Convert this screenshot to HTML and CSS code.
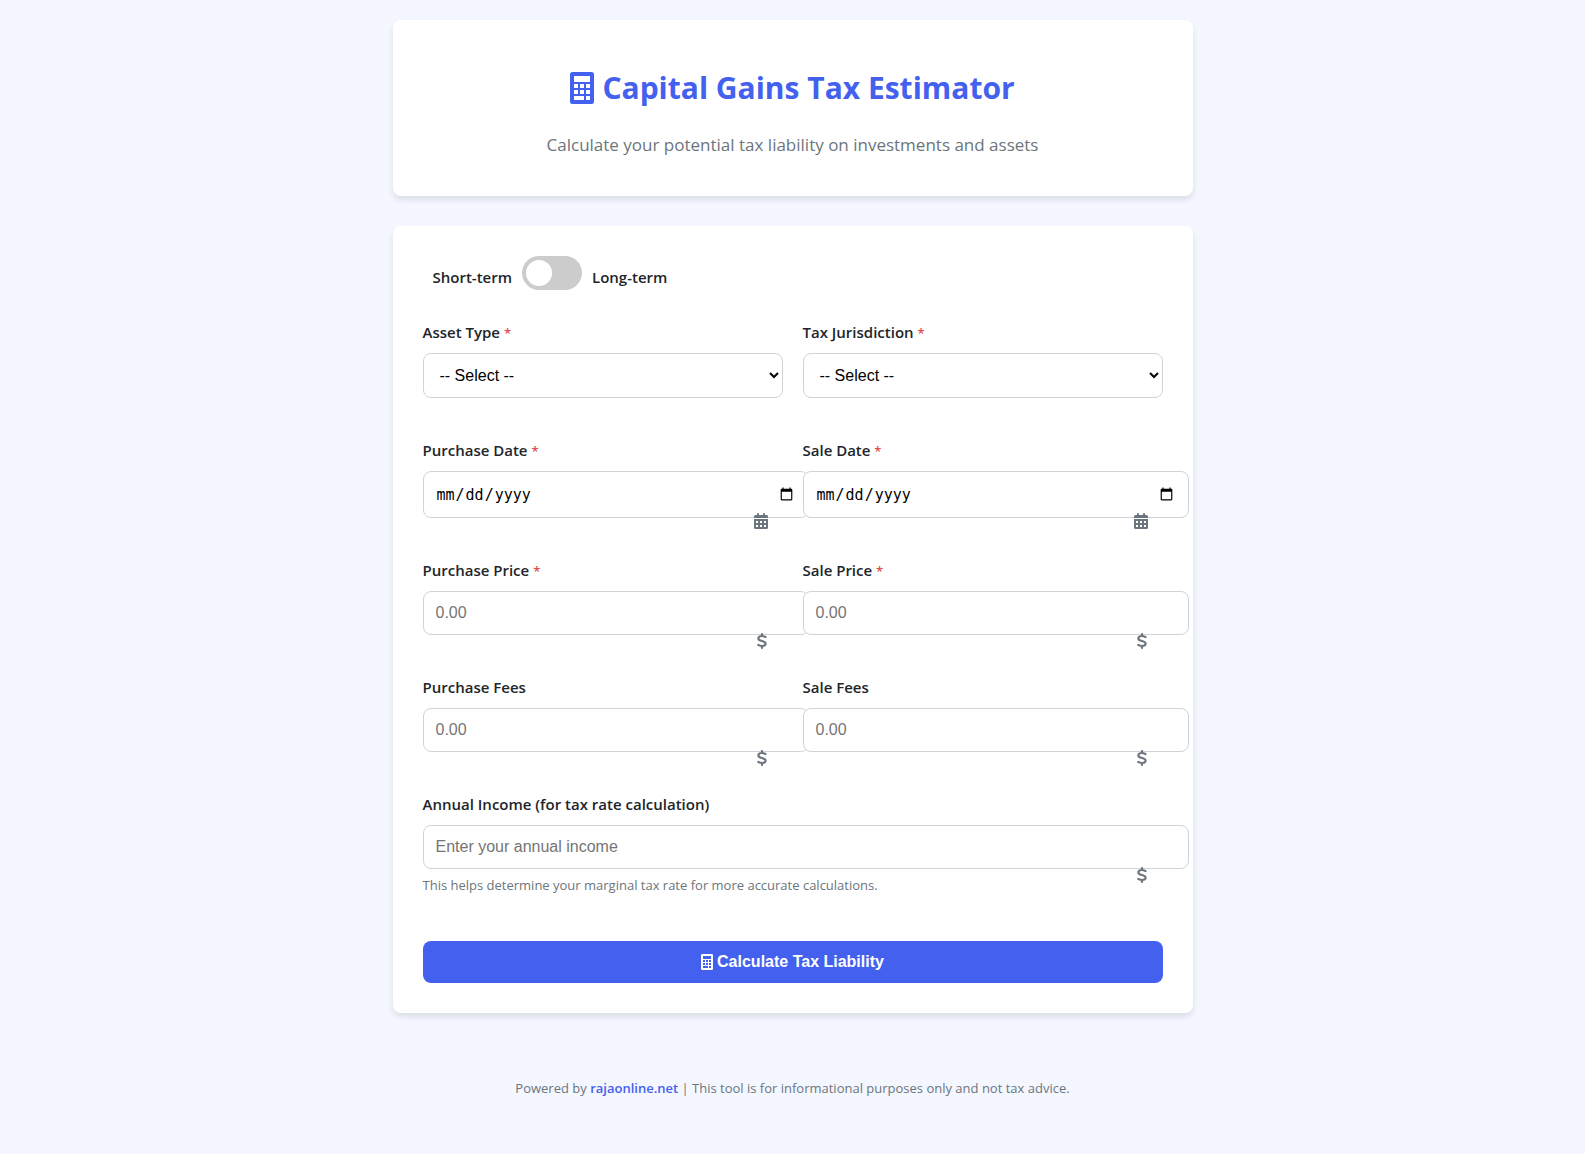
FILE: index.html
```html
<!DOCTYPE html>
<html lang="en">
<head>
<meta charset="utf-8">
<meta name="viewport" content="width=device-width, initial-scale=1">
<title>Capital Gains Tax Estimator</title>
<link rel="stylesheet" href="styles.css">
</head>
<body>
<svg class="sprite" aria-hidden="true">
  <symbol id="calculator" viewBox="0 0 24 32">
    <path fill-rule="evenodd" d="M2.500 0H21.500A2.500 2.500 0 0 1 24 2.500V29.500A2.500 2.500 0 0 1 21.500 32H2.500A2.500 2.500 0 0 1 0 29.500V2.500A2.500 2.500 0 0 1 2.500 0ZM4 4V10H20V4ZM4 12V16H8V12ZM10 12V16H14V12ZM16 12V16H20V12ZM4 18V22H8V18ZM10 18V22H14V18ZM16 18V22H20V18ZM4 24V28H14V24ZM16 24V28H20V24Z"/>
  </symbol>
  <symbol id="calendar" viewBox="0 0 14 16">
    <path fill-rule="evenodd" d="M3 1A1 1 0 0 1 5 1V2H9V1A1 1 0 0 1 11 1V2H12.500A1.500 1.500 0 0 1 14 3.500V5H0V3.500A1.500 1.500 0 0 1 1.500 2H3ZM0 6H14V14.500A1.500 1.500 0 0 1 12.500 16H1.500A1.500 1.500 0 0 1 0 14.500ZM2 8V10H4V8ZM6 8V10H8V8ZM10 8V10H12V8ZM2 12V14H4V12ZM6 12V14H8V12ZM10 12V14H12V12Z"/>
  </symbol>
  <symbol id="dollar" viewBox="0 0 10 16">
    <path fill="none" stroke="currentColor" stroke-width="2.2" stroke-linecap="round" stroke-linejoin="round" d="M5 1.100V3M5 13V14.900M8.500 4C7 3.300 6 3 4.800 3C2.900 3 1.600 3.900 1.400 5.200C1.200 6.900 2.600 7.400 5 8C7.400 8.600 8.800 9.200 8.600 10.900C8.400 12.300 7.100 13 5.200 13C3.800 13 2.600 12.600 1.300 12"/>
  </symbol>
</svg>

<div class="container">
  <header class="card header">
    <h1 class="title"><svg class="title-icon" aria-hidden="true"><use href="#calculator"/></svg>Capital Gains Tax Estimator</h1>
    <p class="subtitle">Calculate your potential tax liability on investments and assets</p>
  </header>

  <main class="card">
    <form class="form">
      <div class="term">
        <span>Short-term</span>
        <input class="switch" type="checkbox" aria-label="Long-term holding">
        <span>Long-term</span>
      </div>

      <div class="row">
        <div class="field">
          <label for="asset">Asset Type <span class="required">*</span></label>
          <select id="asset" class="control"><option>-- Select --</option></select>
        </div>
        <div class="field">
          <label for="jurisdiction">Tax Jurisdiction <span class="required">*</span></label>
          <select id="jurisdiction" class="control"><option>-- Select --</option></select>
        </div>
      </div>

      <div class="row">
        <div class="field">
          <label for="buy-date">Purchase Date <span class="required">*</span></label>
          <div class="box"><input id="buy-date" class="control date" type="date"><svg class="mark calendar" aria-hidden="true"><use href="#calendar"/></svg></div>
        </div>
        <div class="field">
          <label for="sale-date">Sale Date <span class="required">*</span></label>
          <div class="box"><input id="sale-date" class="control date" type="date"><svg class="mark calendar" aria-hidden="true"><use href="#calendar"/></svg></div>
        </div>
      </div>

      <div class="row">
        <div class="field">
          <label for="buy-price">Purchase Price <span class="required">*</span></label>
          <div class="box"><input id="buy-price" class="control" type="number" placeholder="0.00"><svg class="mark" aria-hidden="true"><use href="#dollar"/></svg></div>
        </div>
        <div class="field">
          <label for="sale-price">Sale Price <span class="required">*</span></label>
          <div class="box"><input id="sale-price" class="control" type="number" placeholder="0.00"><svg class="mark" aria-hidden="true"><use href="#dollar"/></svg></div>
        </div>
      </div>

      <div class="row">
        <div class="field">
          <label for="buy-fees">Purchase Fees</label>
          <div class="box"><input id="buy-fees" class="control" type="number" placeholder="0.00"><svg class="mark" aria-hidden="true"><use href="#dollar"/></svg></div>
        </div>
        <div class="field">
          <label for="sale-fees">Sale Fees</label>
          <div class="box"><input id="sale-fees" class="control" type="number" placeholder="0.00"><svg class="mark" aria-hidden="true"><use href="#dollar"/></svg></div>
        </div>
      </div>

      <div class="field">
        <label for="income">Annual Income (for tax rate calculation)</label>
        <div class="box"><input id="income" class="control" type="number" placeholder="Enter your annual income"><svg class="mark" aria-hidden="true"><use href="#dollar"/></svg></div>
        <small class="hint">This helps determine your marginal tax rate for more accurate calculations.</small>
      </div>

      <button class="submit" type="button"><svg class="submit-icon" aria-hidden="true"><use href="#calculator"/></svg>Calculate Tax Liability</button>
    </form>
  </main>

  <footer class="footer">Powered by <a href="#">rajaonline.net</a> | This tool is for informational purposes only and not tax advice.</footer>
</div>
</body>
</html>
```
FILE: styles.css
```css
* {
  box-sizing: border-box;
}

body {
  margin: 0;
  background: #f4f7ff;
  color: #212529;
  font: 15px/26px "Open Sans", "Noto Sans", sans-serif;
}

.sprite {
  display: none;
}

.container {
  max-width: 840px;
  margin: 0 auto;
  padding: 20px;
}

.card {
  margin-bottom: 30px;
  padding: 30px;
  border-radius: 8px;
  background: #fff;
  box-shadow: 0 4px 6px rgba(0, 0, 0, 0.1);
}

svg {
  fill: currentColor;
}

.header {
  padding: 43px 30px 36px;
  text-align: center;
}

.title {
  display: flex;
  align-items: center;
  justify-content: center;
  gap: 8px;
  margin: 0 0 17px;
  color: #4361ee;
  font-size: 30px;
  line-height: 50px;
}

.title-icon {
  width: 24px;
  height: 32px;
}

.subtitle {
  margin: 0;
  color: #6c757d;
  font-size: 17px;
  line-height: 30px;
}

.form {
  display: flex;
  flex-direction: column;
}

.term {
  display: flex;
  align-items: flex-end;
  gap: 10px;
  margin: 0 10px 29px;
  font-weight: 600;
}

.switch {
  width: 60px;
  height: 34px;
  margin: 0;
  padding: 4px;
  appearance: none;
  border-radius: 17px;
  background: #ccc;
  cursor: pointer;
}

.switch::before {
  content: "";
  display: block;
  width: 26px;
  height: 26px;
  border-radius: 50%;
  background: #fff;
}

.switch:checked {
  background: #4361ee;
}

.switch:checked::before {
  margin-left: auto;
}

.row {
  display: grid;
  grid-template-columns: 1fr 1fr;
  gap: 20px;
}

.field {
  min-width: 0;
  margin-bottom: 39px;
}

.field label {
  display: block;
  margin-bottom: 8px;
  font-weight: 600;
}

.required {
  color: #dc5050;
  font-size: 13px;
  line-height: 1;
}

.box {
  position: relative;
}

.control {
  display: block;
  width: 100%;
  padding: 12px;
  border: 1px solid #ced4da;
  border-radius: 8px;
  background: #fff;
  color: #000;
  font: 16px "Liberation Sans", Arial, sans-serif;
}

input.control {
  box-sizing: content-box;
  height: 18px;
}

input.date {
  height: 21px;
  font: 15px "DejaVu Sans Mono", monospace;
}

.mark {
  position: absolute;
  top: 42px;
  right: 16px;
  width: 10px;
  height: 16px;
  color: #6c757d;
}

.mark.calendar {
  right: 15px;
  width: 14px;
}

.hint {
  display: block;
  margin-top: 5px;
  color: #6c757d;
  font-size: 13px;
  line-height: 22px;
}

.submit {
  display: flex;
  align-items: center;
  justify-content: center;
  gap: 4px;
  margin-top: 6px;
  padding: 12px;
  border: 0;
  border-radius: 8px;
  background: #4361ee;
  color: #fff;
  font: bold 16px/18px "Liberation Sans", Arial, sans-serif;
}

.submit-icon {
  width: 12px;
  height: 16px;
}

.footer {
  padding: 32px 0;
  color: #6c757d;
  font-size: 13px;
  text-align: center;
}

.footer a {
  color: #4361ee;
  font-weight: 600;
  text-decoration: none;
}
```
